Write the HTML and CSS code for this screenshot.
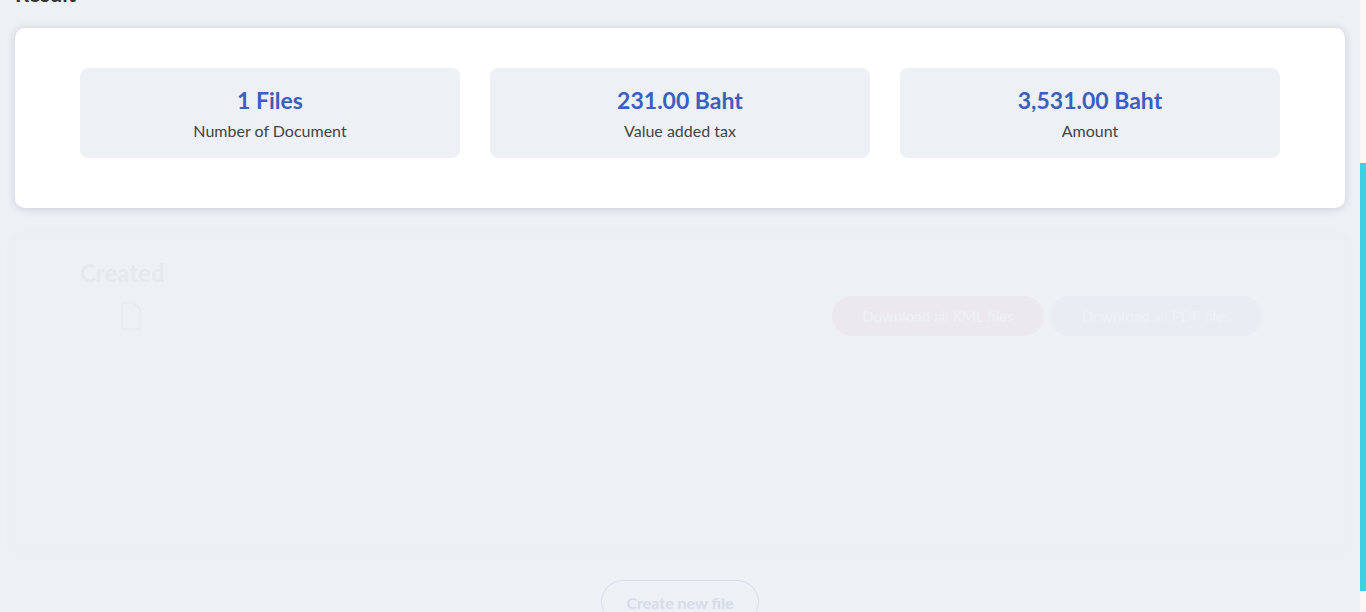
FILE: index.html
```html
<!DOCTYPE html>
<html lang="en">
<head>
<meta charset="utf-8">
<title>Result</title>
<link rel="stylesheet" href="styles.css">
</head>
<body>
<div class="page">
  <h2 class="section-title">Result</h2>
  <section class="card summary">
    <div class="stat">
      <div class="stat-value">1 Files</div>
      <div class="stat-label">Number of Document</div>
    </div>
    <div class="stat">
      <div class="stat-value">231.00 Baht</div>
      <div class="stat-label">Value added tax</div>
    </div>
    <div class="stat">
      <div class="stat-value">3,531.00 Baht</div>
      <div class="stat-label">Amount</div>
    </div>
  </section>
  <section class="card created fading">
    <h3 class="created-title">Created</h3>
    <div class="created-row">
      <div class="file-icon">
        <svg width="22" height="28" viewBox="0 0 22 28"><path d="M2 1h12l6 6v20H2z" fill="none" stroke="#7a8bb5" stroke-width="2"/></svg>
      </div>
      <div class="actions">
        <button class="btn btn-red">Download all XML files</button>
        <button class="btn btn-gray">Download all PDF files</button>
      </div>
    </div>
  </section>
  <div class="footer-actions">
    <button class="btn-outline">Create new file</button>
  </div>
</div>
<div class="scrollbar"><div class="scroll-thumb"></div></div>
</body>
</html>
```
FILE: styles.css
```css
html, body {
  margin: 0;
  padding: 0;
  height: 612px;
  overflow: hidden;
  background: #edf0f5;
  font-family: "Lato", "Noto Sans", sans-serif;
}
.page {
  width: 1330px;
  padding: 0 15px;
  margin-top: -21px;
}
.section-title {
  margin: 0 0 19px;
  font-size: 22px;
  line-height: 30px;
  font-weight: 700;
  color: #333;
}
.card {
  background: #fff;
  border-radius: 10px;
  box-shadow: 0 1px 10px rgba(40, 50, 80, 0.18);
}
.summary {
  display: grid;
  grid-template-columns: repeat(3, 380px);
  gap: 30px;
  padding: 40px 65px 50px;
}
.stat {
  height: 90px;
  background: #edf0f5;
  border-radius: 8px;
  display: flex;
  flex-direction: column;
  align-items: center;
  justify-content: center;
  gap: 7px;
}
.stat-value {
  font-size: 23px;
  font-weight: 700;
  color: #3a5fbe;
  line-height: 28px;
}
.stat-label {
  font-size: 16px;
  color: #444;
  line-height: 20px;
}
.created {
  margin-top: 30px;
  height: 310px;
  box-sizing: border-box;
  padding: 20px 65px;
}
.fading {
  opacity: 0.035;
}
.created-title {
  margin: 0;
  font-size: 24px;
  line-height: 30px;
  font-weight: 700;
  color: #333;
}
.created-row {
  display: flex;
  justify-content: space-between;
  align-items: flex-start;
  margin-top: 8px;
}
.file-icon {
  margin-left: 40px;
  padding-top: 6px;
}
.actions {
  display: flex;
  gap: 6px;
  margin-right: 18px;
}
.btn {
  height: 40px;
  padding: 0 22px;
  border: none;
  border-radius: 20px;
  font-family: inherit;
  font-size: 15px;
  color: #fff;
  width: 212px;
}
.btn-red { background: #e0405a; }
.btn-gray { background: #8f9ab8; }
.footer-actions {
  display: flex;
  justify-content: center;
  margin-top: 32px;
}
.btn-outline {
  height: 44px;
  width: 158px;
  border: 1px solid #d8def0;
  border-radius: 22px;
  background: transparent;
  font-family: inherit;
  font-size: 16px;
  font-weight: 700;
  color: #d5dbeb;
}
.scrollbar {
  position: fixed;
  top: 0;
  right: 0;
  width: 6px;
  height: 612px;
  background: #fdf6f6;
}
.scroll-thumb {
  margin-top: 163px;
  height: 428px;
  background: #3dd0e2;
}
```
